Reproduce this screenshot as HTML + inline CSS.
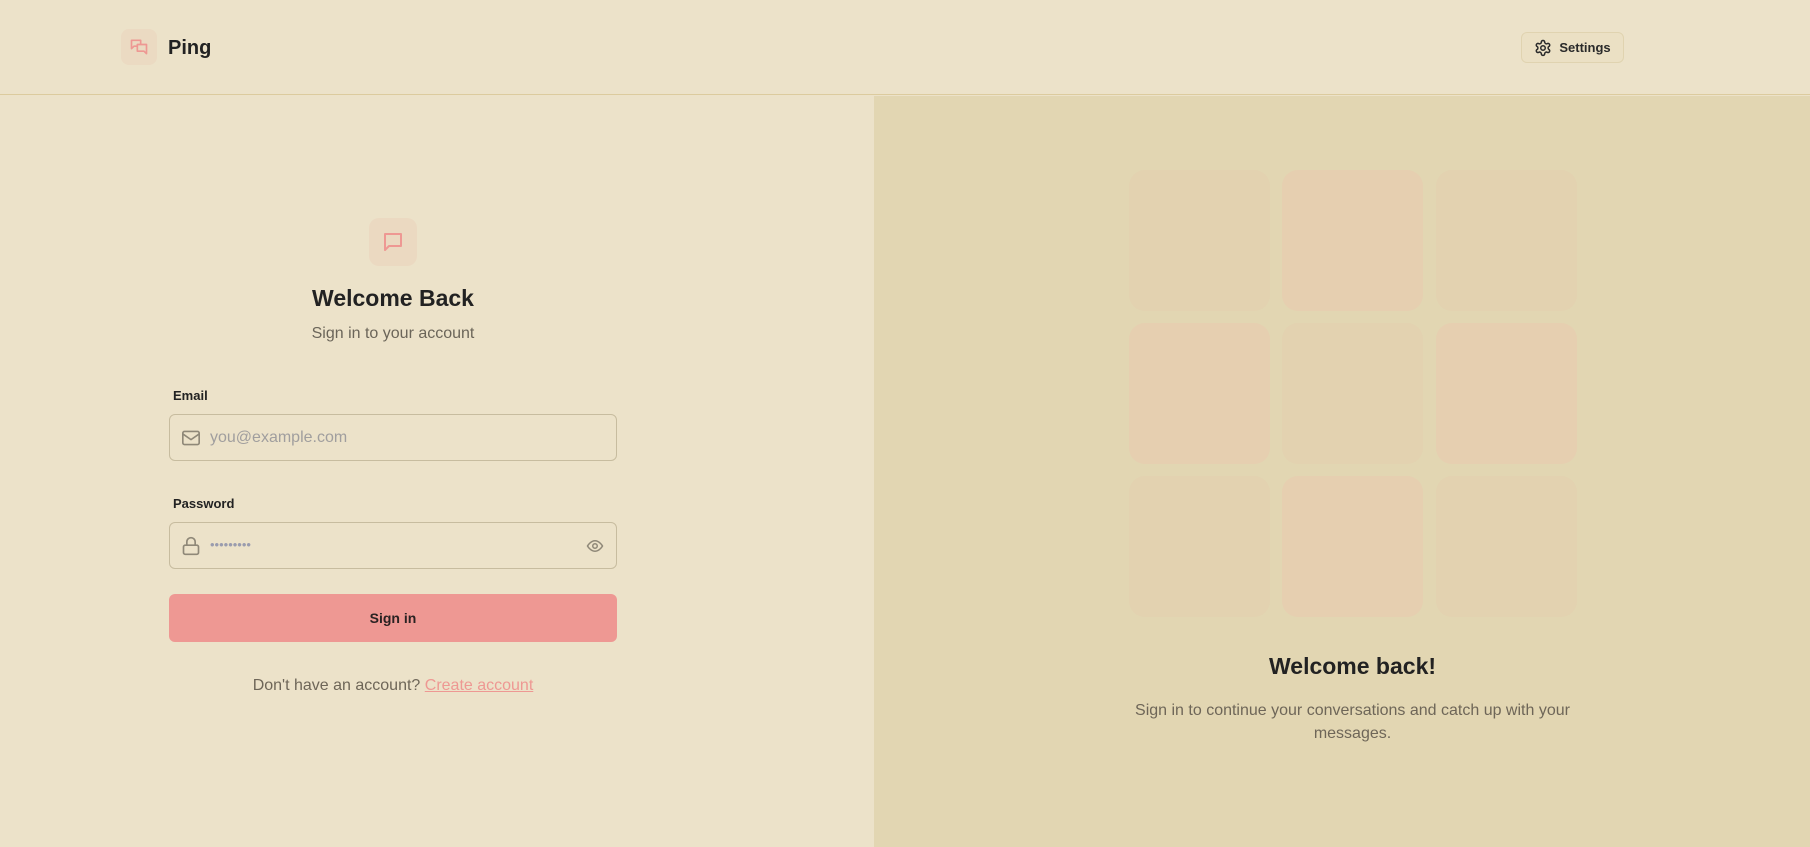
<!DOCTYPE html>
<html><head><meta charset="utf-8"><style>
*{box-sizing:border-box;margin:0;padding:0}
body{width:1810px;height:847px;overflow:hidden;font-family:"Liberation Sans",sans-serif;background:#ece2c9;position:relative;color:#222}
.header{position:absolute;left:0;top:0;width:1810px;height:95px;border-bottom:1px solid #dccb9e;background:#ece2c9}
.logo{position:absolute;left:121px;top:29px;width:36px;height:36px;border-radius:8px;background:#ebdac2;display:flex;align-items:center;justify-content:center}
.brand{position:absolute;left:168px;top:37px;font-size:20px;font-weight:bold;color:#222}
.settings{position:absolute;left:1521px;top:32px;width:103px;height:31px;border:1px solid #e0d3b0;border-radius:6px;background:#ebe0c4;display:flex;align-items:center;justify-content:center;gap:7px;font-size:13px;font-weight:bold;color:#2a2a2a}
.right{position:absolute;left:874px;top:96px;width:936px;height:751px;background:#e2d6b2}
.tile{position:absolute;width:141px;height:141px;border-radius:16px}
.a{background:#e3d2b0}.b{background:#e6cfb0}
.icon2{position:absolute;left:369px;top:218px;width:48px;height:48px;border-radius:10px;background:#ebd9c1;display:flex;align-items:center;justify-content:center}
.t1{position:absolute;left:0;width:786px;top:285px;text-align:center;font-size:23px;font-weight:bold}
.s1{position:absolute;left:0;width:786px;top:325px;text-align:center;font-size:16px;color:#6b6559}
.lbl{position:absolute;left:173px;font-size:13px;font-weight:bold;color:#222}
.inp{position:absolute;left:169px;width:448px;height:47px;border:1px solid #c7bc9f;border-radius:6px}
.ph{position:absolute;left:40px;top:14px;font-size:16px;color:#a09e9e}
.btn{position:absolute;left:169px;top:594px;width:448px;height:48px;border-radius:6px;background:#ee9893;text-align:center;line-height:48px;font-size:14px;font-weight:bold;color:#2a2222}
.bot{position:absolute;left:0;width:786px;top:677px;text-align:center;font-size:16px;color:#6e6658}
.bot a{color:#ee9893;text-decoration:underline}
.t2{position:absolute;left:1100px;width:505px;top:653px;text-align:center;font-size:23px;font-weight:bold}
.s2{position:absolute;left:1130px;width:445px;top:699px;text-align:center;font-size:16px;line-height:23px;color:#6e6658}
</style></head><body>
<div class="header">
<div class="logo"><svg width="20" height="20" viewBox="0 0 24 24" fill="none" stroke="#ee9893" stroke-width="2" stroke-linejoin="round"><path d="M14 9V4H3v10l3-3h3"/><path d="M10 9h11v11l-3-3h-8z"/></svg></div>
<div class="brand">Ping</div>
<div class="settings"><svg width="18" height="18" viewBox="0 0 24 24" fill="none" stroke="#2a2a2a" stroke-width="2" stroke-linejoin="round"><path d="M12.2 2h-.4a2 2 0 0 0-2 2v.2a2 2 0 0 1-1 1.7l-.4.3a2 2 0 0 1-2 0l-.2-.1a2 2 0 0 0-2.7.7l-.2.4a2 2 0 0 0 .7 2.7l.2.1a2 2 0 0 1 1 1.7v.5a2 2 0 0 1-1 1.7l-.2.1a2 2 0 0 0-.7 2.7l.2.4a2 2 0 0 0 2.7.7l.2-.1a2 2 0 0 1 2 0l.4.3a2 2 0 0 1 1 1.7v.2a2 2 0 0 0 2 2h.4a2 2 0 0 0 2-2v-.2a2 2 0 0 1 1-1.7l.4-.3a2 2 0 0 1 2 0l.2.1a2 2 0 0 0 2.7-.7l.2-.4a2 2 0 0 0-.7-2.7l-.2-.1a2 2 0 0 1-1-1.700v-.5a2 2 0 0 1 1-1.7l.2-.1a2 2 0 0 0 .7-2.7l-.2-.4a2 2 0 0 0-2.7-.7l-.2.1a2 2 0 0 1-2 0l-.4-.3a2 2 0 0 1-1-1.7V4a2 2 0 0 0-2-2z"/><circle cx="12" cy="12" r="3"/></svg>Settings</div>
</div>
<div class="right"></div>
<div class="tile a" style="left:1129px;top:170px"></div>
<div class="tile b" style="left:1282px;top:170px"></div>
<div class="tile a" style="left:1436px;top:170px"></div>
<div class="tile b" style="left:1129px;top:323px"></div>
<div class="tile a" style="left:1282px;top:323px"></div>
<div class="tile b" style="left:1436px;top:323px"></div>
<div class="tile a" style="left:1129px;top:476px"></div>
<div class="tile b" style="left:1282px;top:476px"></div>
<div class="tile a" style="left:1436px;top:476px"></div>
<div class="t2">Welcome back!</div>
<div class="s2">Sign in to continue your conversations and catch up with your messages.</div>

<div class="icon2"><svg width="24" height="24" viewBox="0 0 24 24" fill="none" stroke="#ee9893" stroke-width="2" stroke-linejoin="round"><path d="M4 4h16v12H8l-4 4z"/></svg></div>
<div class="t1">Welcome Back</div>
<div class="s1">Sign in to your account</div>
<div class="lbl" style="top:388px">Email</div>
<div class="inp" style="top:414px"><svg style="position:absolute;left:11px;top:14px" width="20" height="18" viewBox="0 0 24 22" fill="none" stroke="#8f8878" stroke-width="2" stroke-linejoin="round"><rect x="2" y="3" width="20" height="16" rx="2"/><path d="M2 6l10 7 10-7"/></svg><span class="ph">you@example.com</span></div>
<div class="lbl" style="top:496px">Password</div>
<div class="inp" style="top:522px"><svg style="position:absolute;left:11px;top:12px" width="20" height="22" viewBox="0 0 24 24" fill="none" stroke="#8f8878" stroke-width="2" stroke-linejoin="round"><rect x="3" y="11" width="18" height="11" rx="2"/><path d="M7 11V7a5 5 0 0 1 10 0v4"/></svg><span class="ph" style="top:14px;letter-spacing:0px;font-size:13px;color:#9a9cae">•••••••••</span><svg style="position:absolute;right:11px;top:14px" width="20" height="18" viewBox="0 0 24 24" fill="none" stroke="#8f8878" stroke-width="2"><path d="M2 12s4-7 10-7 10 7 10 7-4 7-10 7S2 12 2 12z"/><circle cx="12" cy="12" r="3"/></svg></div>
<div class="btn">Sign in</div>
<div class="bot">Don't have an account? <a>Create account</a></div>
</body></html>
